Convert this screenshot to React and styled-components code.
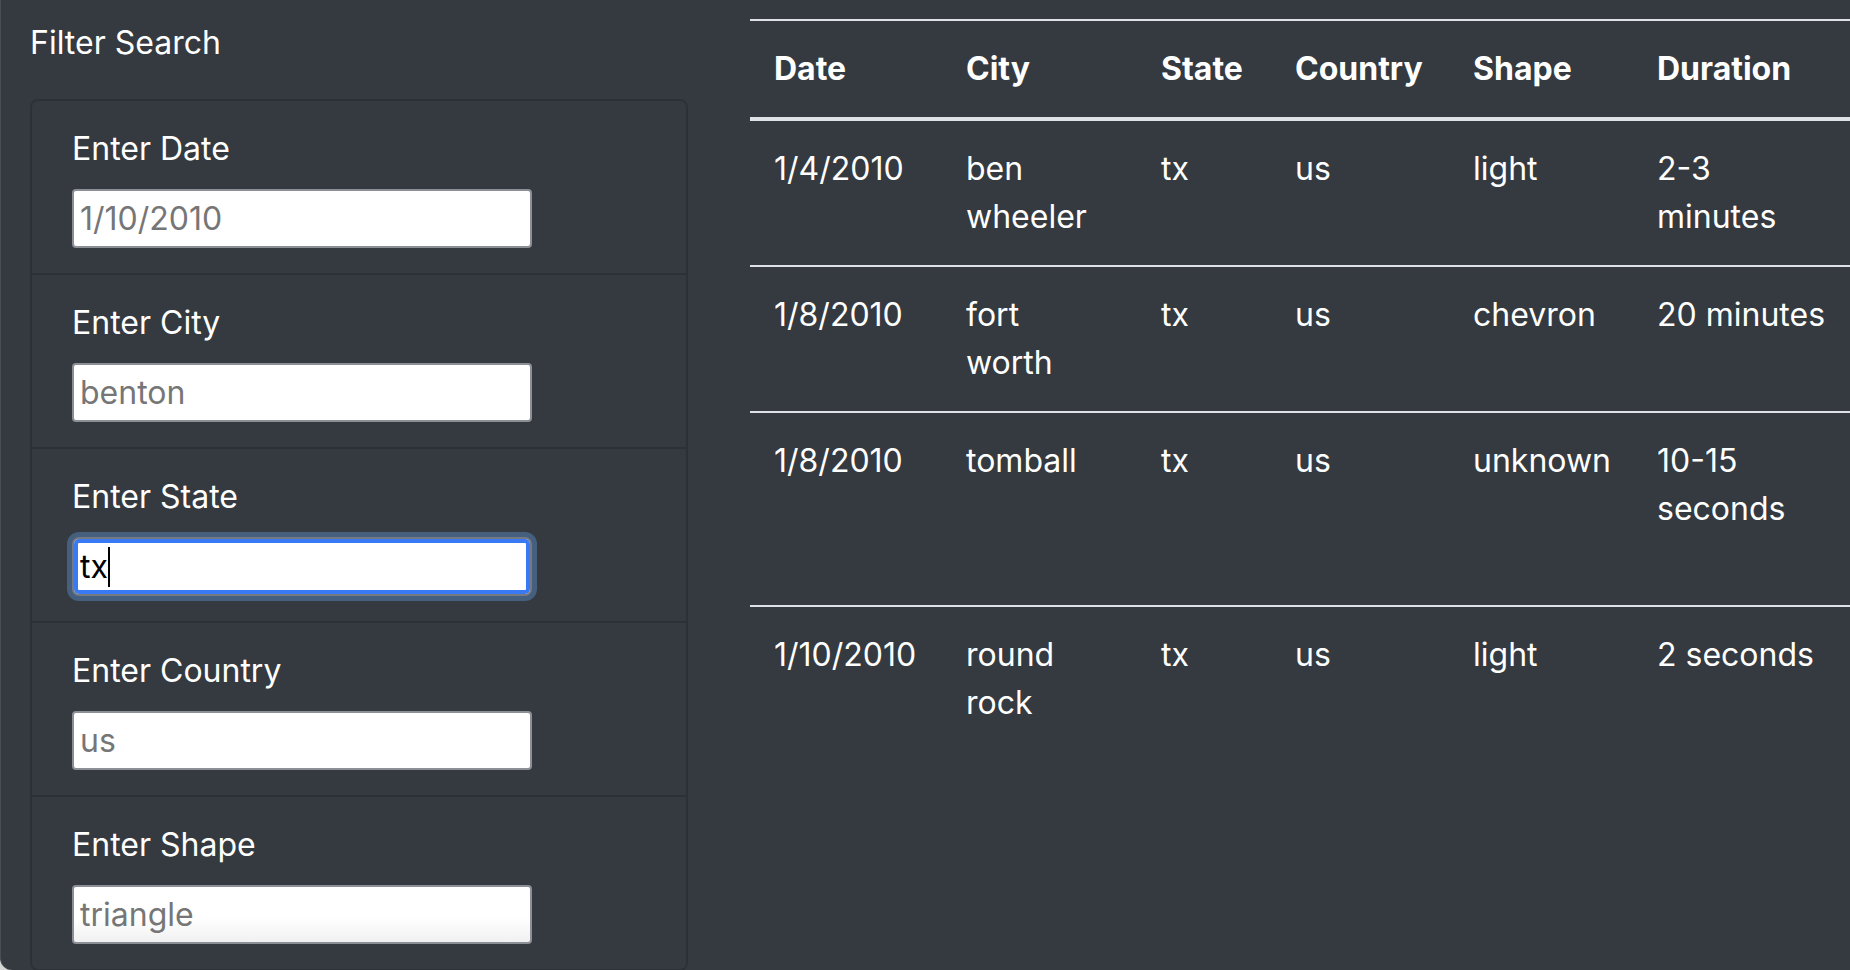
import React from "react";
import styled, { createGlobalStyle, css } from "styled-components";

const GlobalStyle = createGlobalStyle`
  html, body {
    margin: 0;
    padding: 0;
    background: #d6d6d6;
    overflow: hidden;
  }
  body {
    font-family: Inter, "Noto Sans", "Liberation Sans", sans-serif;
    -webkit-font-smoothing: antialiased;
  }
  * { box-sizing: border-box; }
`;

const Page = styled.div`
  display: flex;
  align-items: flex-start;
  width: 1850px;
  height: 970px;
  overflow: hidden;
  background: #343a40;
  color: #ffffff;
  font-size: 32px;
  line-height: 48px;
  border-left: 1px solid #484e54;
  border-bottom-left-radius: 12px;
`;

const Sidebar = styled.aside`
  flex: 0 0 719px;
  padding: 19px 0 0 29px;
`;

const Heading = styled.div`
  margin: 0 0 32px;
  font-size: 32px;
  line-height: 48px;
  font-weight: 400;
`;

const FilterList = styled.ul`
  list-style: none;
  margin: 0;
  padding: 0;
  width: 658px;
  border: 2px solid rgba(0, 0, 0, 0.14);
  border-radius: 8px;
`;

const FilterItem = styled.li`
  padding: 24px 40px 25px;
  & + & {
    border-top: 2px solid rgba(0, 0, 0, 0.14);
  }
`;

const Label = styled.label`
  display: block;
  margin-bottom: 16px;
  font-size: 32px;
  line-height: 48px;
  color: #ffffff;
`;

const InputWrap = styled.div`
  position: relative;
  width: 460px;
`;

const Input = styled.input`
  display: block;
  width: 460px;
  height: 59px;
  margin: 0;
  padding: 2px 6px;
  font-family: inherit;
  font-size: 32px;
  line-height: 48px;
  color: #000000;
  background: ${(p) =>
    p.$shaded ? "linear-gradient(to bottom, #ffffff 55%, #f1f1f1 100%)" : "#ffffff"};
  border: 2px solid #8c8f96;
  border-radius: 4px;
  outline: none;
  caret-color: transparent;
  &::placeholder {
    color: #767676;
    opacity: 1;
  }
  ${(p) =>
    p.$focused &&
    css`
      border-color: #757a82;
      border-radius: 7px;
      box-shadow: inset 0 0 0 4px #3a79f4, 0 0 0 5px #45607e;
    `}
`;

const Caret = styled.span`
  position: absolute;
  left: 36px;
  top: 10px;
  width: 2px;
  height: 40px;
  background: #000000;
`;

const Main = styled.main`
  flex: 1 1 auto;
  min-width: 0;
  padding: 19px 0 0 30px;
  overflow: hidden;
`;

const Table = styled.table`
  border-collapse: collapse;
  table-layout: fixed;
  width: 100%;
  color: #ffffff;
  font-size: 32px;
  line-height: 48px;
`;

const Col = styled.col`
  width: ${(p) => (p.$w ? `${p.$w}px` : "auto")};
`;

const Th = styled.th`
  padding: 24px;
  text-align: left;
  font-weight: 700;
  vertical-align: bottom;
  border-top: 2px solid #dee2e6;
  border-bottom: 4px solid #dee2e6;
  white-space: nowrap;
`;

const Row = styled.tr`
  height: ${(p) => p.$lines * 48 + 50}px;
`;

const Td = styled.td`
  padding: 24px;
  vertical-align: top;
  border-top: 2px solid #dee2e6;
  white-space: ${(p) => (p.$nowrap ? "nowrap" : "normal")};
`;

const filters = [
  { id: "date", label: "Enter Date", placeholder: "1/10/2010" },
  { id: "city", label: "Enter City", placeholder: "benton" },
  { id: "state", label: "Enter State", placeholder: "", value: "tx", focused: true },
  { id: "country", label: "Enter Country", placeholder: "us" },
  { id: "shape", label: "Enter Shape", placeholder: "triangle", shaded: true },
];

const columns = [
  { key: "date", title: "Date", w: 192 },
  { key: "city", title: "City", w: 195 },
  { key: "state", title: "State", w: 134 },
  { key: "country", title: "Country", w: 178 },
  { key: "shape", title: "Shape", w: 184 },
  { key: "duration", title: "Duration" },
];

const rows = [
  { date: "1/4/2010", city: "ben wheeler", state: "tx", country: "us", shape: "light", duration: "2-3 minutes", lines: 2 },
  { date: "1/8/2010", city: "fort worth", state: "tx", country: "us", shape: "chevron", duration: "20 minutes", lines: 2 },
  { date: "1/8/2010", city: "tomball", state: "tx", country: "us", shape: "unknown", duration: "10-15 seconds", lines: 3 },
  { date: "1/10/2010", city: "round rock", state: "tx", country: "us", shape: "light", duration: "2 seconds", lines: 3 },
];

export default function App() {
  return (
    <>
      <GlobalStyle />
      <Page>
        <Sidebar>
          <Heading>Filter Search</Heading>
          <FilterList>
            {filters.map((f) => (
              <FilterItem key={f.id}>
                <Label htmlFor={f.id}>{f.label}</Label>
                <InputWrap>
                  <Input
                    id={f.id}
                    type="text"
                    placeholder={f.placeholder}
                    defaultValue={f.value}
                    $focused={f.focused}
                    $shaded={f.shaded}
                  />
                  {f.focused && <Caret />}
                </InputWrap>
              </FilterItem>
            ))}
          </FilterList>
        </Sidebar>
        <Main>
          <Table>
            <colgroup>
              {columns.map((c) => (
                <Col key={c.key} $w={c.w} />
              ))}
            </colgroup>
            <thead>
              <tr>
                {columns.map((c) => (
                  <Th key={c.key}>{c.title}</Th>
                ))}
              </tr>
            </thead>
            <tbody>
              {rows.map((r, i) => (
                <Row key={i} $lines={r.lines}>
                  <Td $nowrap>{r.date}</Td>
                  <Td>{r.city}</Td>
                  <Td>{r.state}</Td>
                  <Td>{r.country}</Td>
                  <Td $nowrap>{r.shape}</Td>
                  <Td>{r.duration}</Td>
                </Row>
              ))}
            </tbody>
          </Table>
        </Main>
      </Page>
    </>
  );
}
